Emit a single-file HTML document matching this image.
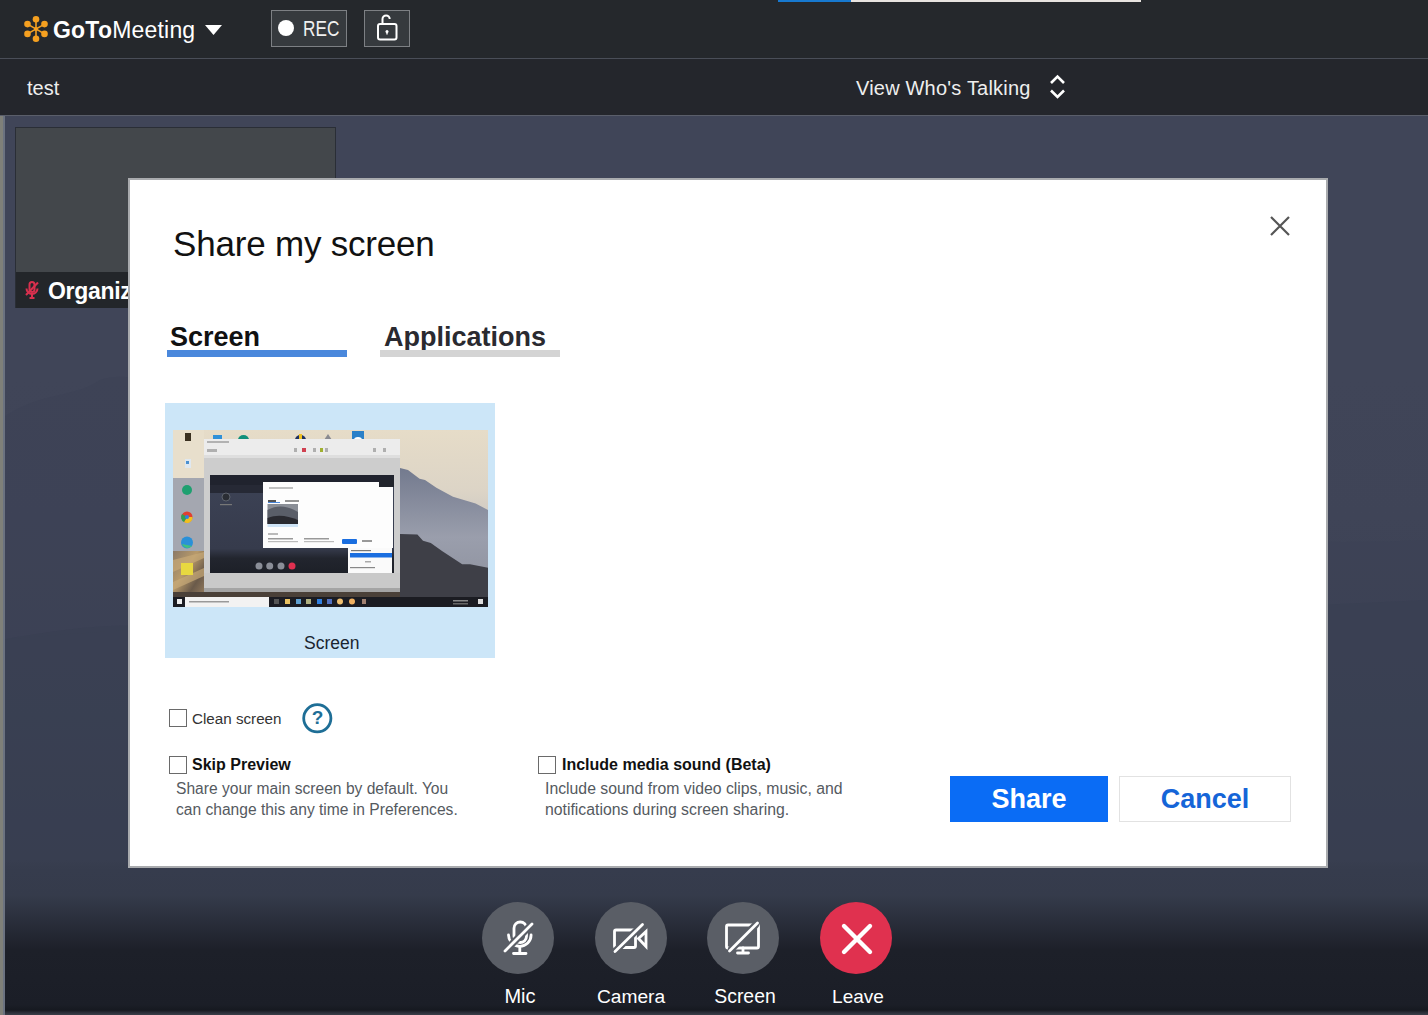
<!DOCTYPE html>
<html><head><meta charset="utf-8">
<style>
*{margin:0;padding:0;box-sizing:border-box}
html,body{width:1428px;height:1015px;overflow:hidden;background:#404558;font-family:"Liberation Sans",sans-serif}
.a{position:absolute}
.t{white-space:nowrap;line-height:1}
#top{left:0;top:0;width:1428px;height:58px;background:#25282c}
#bar2{left:0;top:58px;width:1428px;height:57px;background:#24262c;border-top:1px solid #4a4e58}
#main{left:0;top:115px;width:1428px;height:900px;border-top:1px solid #5a5e6a;
background:linear-gradient(#404558 0px,#404558 260px,#3f4457 400px,#3b4154 600px,#383d4f 740px,#353a4a 765px,#2c303c 812px,#1d2029 840px,#1b1d26 900px)}
svg{position:absolute;overflow:visible}
</style></head><body>
<div id="top" class="a"></div>
<div id="bar2" class="a"></div>
<div id="main" class="a"></div>
<!-- subtle mountains in bg -->
<svg style="left:0;top:0" width="1428" height="1015">
<path d="M0 420 C40 390 70 400 100 380 C130 370 160 385 190 395 C600 420 1000 560 1428 540 L1428 600 C1000 640 400 600 0 640Z" fill="#3c4256" opacity="0.55"/>
<path d="M0 640 C60 630 120 620 170 630 C500 640 1000 620 1428 600 L1428 870 L0 870Z" fill="#393f51" opacity="0.6"/>
</svg>
<div class="a" style="left:0;top:860px;width:1428px;height:155px;background:linear-gradient(rgba(54,60,77,0) 0px,#363c4d 10px,#353b4b 35px,#2b303d 58px,#1d2029 90px,#1b1e27 145px,#161920 150px,#2e323c 153px,#3a3e48 155px)"></div>
<!-- left strip -->
<div class="a" style="left:0;top:116px;width:3px;height:899px;background:#7f8079"></div>
<div class="a" style="left:3px;top:116px;width:2px;height:899px;background:#6b7280"></div>
<!-- top progress -->
<div class="a" style="left:778px;top:0;width:73px;height:2px;background:#1779d0"></div>
<div class="a" style="left:851px;top:0;width:290px;height:2px;background:#e8e4e0"></div>

<!-- logo -->
<svg style="left:22px;top:15px" width="28" height="28" viewBox="-14 -14 28 28">
<g stroke="#f5a020" stroke-width="1.6">
<line x1="0" y1="-9.8" x2="0" y2="9.8"/><line x1="-8.5" y1="-4.9" x2="8.5" y2="4.9"/><line x1="-8.5" y1="4.9" x2="8.5" y2="-4.9"/></g>
<g fill="#f5a020"><circle cx="0" cy="-9.8" r="3.3"/><circle cx="0" cy="9.8" r="3.3"/><circle cx="8.5" cy="-4.9" r="3.3"/><circle cx="8.5" cy="4.9" r="3.3"/><circle cx="-8.5" cy="-4.9" r="3.3"/><circle cx="-8.5" cy="4.9" r="3.3"/><circle r="2"/></g>
</svg>
<div class="a t" style="left:53px;top:19px;font-size:23px;color:#fff;letter-spacing:0.2px"><b>GoTo</b>Meeting</div>
<svg style="left:205px;top:25px" width="17" height="10"><path d="M0 0H17L8.5 10Z" fill="#fff"/></svg>
<!-- REC -->
<div class="a" style="left:271px;top:10px;width:76px;height:37px;border:1px solid #7d8084;background:#363a3e"></div>
<div class="a" style="left:278px;top:20px;width:16px;height:16px;border-radius:50%;background:#fff"></div>
<div class="a t" style="left:303px;top:19px;font-size:21.5px;color:#f0f0f0;transform:scaleX(0.8);transform-origin:0 0">REC</div>
<div class="a" style="left:364px;top:10px;width:46px;height:37px;border:1px solid #7d8084;background:#363a3e"></div>
<svg style="left:364px;top:10px" width="46" height="37">
<path d="M18.5 13.5 V9 a3.6 3.6 0 0 1 7.2 0" fill="none" stroke="#fff" stroke-width="2"/>
<rect x="14" y="14" width="18.5" height="15.5" rx="2" fill="none" stroke="#fff" stroke-width="2"/>
<circle cx="23" cy="21.5" r="1.5" fill="#fff"/><rect x="22.3" y="21.5" width="1.4" height="3" fill="#fff"/>
</svg>

<div class="a t" style="left:27px;top:78px;font-size:20px;color:#eee">test</div>
<div class="a t" style="left:856px;top:78px;font-size:20px;color:#eee;letter-spacing:0.2px">View Who's Talking</div>
<svg style="left:1049px;top:74px" width="17" height="26"><path d="M2 9 L8.5 2.5 L15 9 M2 16.5 L8.5 23 L15 16.5" fill="none" stroke="#fff" stroke-width="2.6"/></svg>

<!-- video tile -->
<div class="a" style="left:15px;top:127px;width:321px;height:181px;background:#43474b;border:1px solid #2a2e36"></div>
<div class="a" style="left:16px;top:272px;width:320px;height:36px;background:#23262a"></div>
<svg style="left:25px;top:281px" width="14" height="18">
<g fill="none" stroke="#d8304e" stroke-width="2"><rect x="4.5" y="1" width="5" height="10" rx="2.5"/><path d="M1.5 7.5 a5.5 5.5 0 0 0 11 0"/><path d="M7 13v3M4.5 17h5"/><path d="M1 14 L13 1.5"/></g></svg>
<div class="a t" style="left:48px;top:280px;font-size:23px;color:#fff;font-weight:bold;letter-spacing:-0.3px">Organiz</div>

<!-- dialog -->
<div id="dlg" class="a" style="left:128px;top:178px;width:1200px;height:690px;background:#fff;border:2px solid #a9abae"></div>
<div class="a t" style="left:173px;top:226px;font-size:35px;color:#111;letter-spacing:-0.2px">Share my screen</div>
<svg style="left:1268px;top:214px" width="24" height="24"><path d="M3 3L21 21M21 3L3 21" stroke="#555" stroke-width="2.2"/></svg>
<div class="a t" style="left:170px;top:324px;font-size:27px;font-weight:bold;color:#111">Screen</div>
<div class="a" style="left:167px;top:350px;width:180px;height:7px;background:#4a88dc"></div>
<div class="a t" style="left:384px;top:324px;font-size:27px;font-weight:bold;color:#2a2a30">Applications</div>
<div class="a" style="left:380px;top:350px;width:180px;height:7px;background:#d4d4d4"></div>

<!-- thumbnail -->
<div class="a" style="left:165px;top:403px;width:330px;height:255px;background:#cce6f8"></div>
<svg style="left:173px;top:430px" width="315" height="177" viewBox="0 0 315 177">
<defs>
<linearGradient id="sky" x1="0" y1="0" x2="0" y2="1"><stop offset="0" stop-color="#e6dcc8"/><stop offset="0.35" stop-color="#dcd4c6"/><stop offset="0.6" stop-color="#c4c2c2"/><stop offset="1" stop-color="#a8a8b0"/></linearGradient>
<linearGradient id="m1" x1="0" y1="0" x2="0" y2="1"><stop offset="0" stop-color="#737a8e"/><stop offset="0.5" stop-color="#9a9eac"/><stop offset="1" stop-color="#8a8e9a"/></linearGradient>
<linearGradient id="gw" x1="0" y1="0" x2="0" y2="1"><stop offset="0" stop-color="#3d4356"/><stop offset="0.75" stop-color="#363b4c"/><stop offset="0.85" stop-color="#22252e"/><stop offset="1" stop-color="#1d2028"/></linearGradient>
<linearGradient id="rock" x1="0" y1="0" x2="1" y2="1"><stop offset="0" stop-color="#8a7a68"/><stop offset="0.4" stop-color="#b89a6a"/><stop offset="0.7" stop-color="#6a5a4a"/><stop offset="1" stop-color="#9a8060"/></linearGradient>
</defs>
<rect width="315" height="177" fill="url(#sky)"/>
<!-- right mountains -->
<path d="M227 38 L235 40 L246.6 48.8 L252 50 L263.4 57.7 L280 66.7 L302.6 73.4 L315 80 V177 H227Z" fill="url(#m1)"/>
<path d="M227 104 L244.4 104.6 L250 110.8 L257.8 113 L269 120.9 L289.2 134.3 L297 134.3 L315 137.7 V177 H227Z" fill="#3e3f47"/>
<!-- left column -->
<rect x="0" y="0" width="31" height="48" fill="#e8dfcc"/>
<rect x="0" y="48" width="31" height="73" fill="#a4a7b0"/>
<rect x="0" y="121" width="31" height="48" fill="url(#rock)"/>
<path d="M0 130 L31 122 L31 128 L0 142Z M0 152 L31 138 L31 146 L0 160Z" fill="#c8aa78" opacity="0.7"/>
<!-- desktop icons -->
<rect x="12" y="3" width="6" height="8" fill="#3a3020"/>
<rect x="12" y="29" width="6" height="9" fill="#dfe8f0"/><rect x="13" y="31" width="3" height="3" fill="#4a90d0"/>
<circle cx="14" cy="60" r="5" fill="#1ea070"/>
<circle cx="14" cy="87" r="5.5" fill="#e04030"/><path d="M14 87 L19.5 87 A5.5 5.5 0 0 1 11 92Z" fill="#f0c020"/><path d="M14 87 L11 92 A5.5 5.5 0 0 1 9 84Z" fill="#30a050"/><circle cx="14" cy="87" r="2" fill="#3080e0"/>
<circle cx="14" cy="112.5" r="6" fill="#2a90d8"/><path d="M9 114 a6 6 0 0 0 10 2" fill="#40c080"/>
<rect x="8" y="133" width="12" height="12" fill="#e8d840"/>
<rect x="40" y="5" width="9" height="6" fill="#3090d8"/>
<path d="M65 10 a5.5 5 0 0 1 11 0Z" fill="#10907a"/>
<path d="M122 10 a5.5 5 0 0 1 11 0Z" fill="#203060"/><rect x="126" y="4" width="3" height="6" fill="#f0c020"/>
<path d="M151 10 l4 -6 l4 6Z" fill="#8a8a90"/>
<rect x="179" y="1" width="12" height="10" fill="#2a80c8"/><path d="M181 10 a4 3 0 0 1 8 0Z" fill="#fff"/>
<!-- explorer window -->
<rect x="31" y="9" width="196" height="153" fill="#cdcdcd"/>
<rect x="31" y="9" width="196" height="16" fill="#ececec"/>
<rect x="31" y="25" width="196" height="3" fill="#dedede"/>
<rect x="31" y="143" width="196" height="16" fill="#c9c9c9"/>
<rect x="31" y="158" width="196" height="4" fill="#a4a4a4"/>
<rect x="34" y="11" width="22" height="2" fill="#777" opacity="0.5"/>
<g fill="#888" opacity="0.6"><rect x="34" y="19" width="10" height="3"/><rect x="121" y="18" width="3" height="4"/><rect x="140" y="18" width="3" height="4"/><rect x="152" y="18" width="3" height="4"/><rect x="200" y="18" width="3" height="4"/><rect x="210" y="18" width="3" height="4"/></g>
<rect x="129" y="18" width="4" height="4" fill="#d04050"/><rect x="147" y="18" width="3" height="4" fill="#a0b030"/>
<!-- goto window -->
<rect x="37" y="45" width="184" height="98" fill="url(#gw)"/>
<rect x="37" y="45" width="184" height="10" fill="#20232e"/>
<rect x="37" y="55" width="53" height="8" fill="#262935"/>
<circle cx="53" cy="67" r="4" fill="#2a2d34" stroke="#6a6e78" stroke-width="0.8"/><rect x="47" y="74" width="12" height="1.2" fill="#777"/>
<g fill="#8a8e98"><circle cx="86" cy="136" r="3.5"/><circle cx="96.7" cy="136" r="3.5"/><circle cx="108" cy="136" r="3.5"/></g>
<circle cx="119" cy="136" r="3.5" fill="#e03050"/>
<!-- inner dialog -->
<rect x="90" y="52" width="130" height="66" fill="#fdfdfd"/>
<rect x="96" y="57" width="24" height="2" fill="#999" opacity="0.6"/>
<rect x="95" y="70" width="8" height="2" fill="#555"/><rect x="112" y="70" width="14" height="2" fill="#666" opacity="0.7"/>
<rect x="95" y="72" width="12" height="1" fill="#4a88dc"/>
<rect x="94.5" y="74" width="30.5" height="20" fill="#8a8e96"/>
<path d="M94.5 80 C105 74 115 76 125 82 V94 H94.5Z" fill="#5a5e68"/>
<path d="M94.5 88 C105 84 115 86 125 90 V94 H94.5Z" fill="#2a2a30"/>
<rect x="94.5" y="94" width="30.5" height="3" fill="#cfe4f6"/>
<rect x="95" y="103" width="10" height="2" fill="#bbb"/>
<rect x="95" y="108" width="25" height="1.5" fill="#999"/><rect x="131" y="108" width="25" height="1.5" fill="#999"/>
<rect x="95" y="111" width="30" height="1.2" fill="#bbb"/><rect x="131" y="111" width="30" height="1.2" fill="#bbb"/>
<rect x="169" y="109" width="15" height="5" rx="1" fill="#1a6ee0"/>
<rect x="189" y="110" width="10" height="2" fill="#999"/>
<rect x="206" y="50" width="15" height="7" fill="#22252c"/>
<!-- right popup -->
<rect x="175" y="118" width="44" height="25" fill="#fafafa"/>
<rect x="177" y="123" width="42" height="4.5" fill="#1a6ee0"/>
<rect x="178" y="120" width="20" height="1.2" fill="#777"/>
<rect x="192" y="131" width="6" height="1.5" fill="#aaa"/>
<rect x="177" y="137" width="25" height="1.2" fill="#888"/>
<!-- taskbar -->
<rect x="0" y="162" width="227" height="5" fill="#4a4038"/>
<rect x="0" y="167" width="315" height="10" fill="#1b1c22"/>
<rect x="4" y="169" width="5" height="5" fill="#eee"/>
<rect x="12" y="167" width="84" height="10" fill="#f2f2f2"/>
<rect x="16" y="171" width="40" height="1.5" fill="#999"/>
<g><rect x="101" y="169" width="5" height="5" fill="#555"/><rect x="112" y="169" width="5" height="5" fill="#e8c060"/><rect x="123" y="169" width="5" height="5" fill="#60a0d0"/><rect x="133" y="169" width="5" height="5" fill="#b0b080"/><rect x="144" y="169" width="5" height="5" fill="#3080e0"/><rect x="154" y="169" width="5" height="5" fill="#5070c0"/><circle cx="167" cy="171.5" r="3" fill="#f0c070"/><circle cx="179" cy="171.5" r="3" fill="#f0b060"/><rect x="189" y="169" width="4" height="5" fill="#a08070"/></g>
<rect x="280" y="170" width="15" height="1.5" fill="#888"/><rect x="280" y="173" width="15" height="1.5" fill="#666"/><rect x="305" y="169" width="5" height="5" fill="#ddd"/>
</svg>

<div class="a t" style="left:304px;top:635px;font-size:17.5px;color:#1a2530">Screen</div>

<!-- checkboxes -->
<div class="a" style="left:169px;top:709px;width:18px;height:18px;border:1.5px solid #6a6a6a"></div>
<div class="a t" style="left:192px;top:711px;font-size:15.2px;color:#333">Clean screen</div>
<svg style="left:302px;top:703px" width="31" height="31"><circle cx="15.3" cy="15.3" r="13.6" fill="none" stroke="#1e6e96" stroke-width="2.8"/></svg>
<div class="a t" style="left:302px;top:708px;width:31px;text-align:center;font-size:19px;font-weight:bold;color:#1e6e96">?</div>
<div class="a" style="left:169px;top:756px;width:18px;height:18px;border:1.5px solid #6a6a6a"></div>
<div class="a t" style="left:192px;top:757px;font-size:16px;font-weight:bold;color:#111">Skip Preview</div>
<div class="a t" style="left:176px;top:779px;font-size:15.6px;color:#555a5f;line-height:20.5px">Share your main screen by default. You<br>can change this any time in Preferences.</div>
<div class="a" style="left:538px;top:756px;width:18px;height:18px;border:1.5px solid #6a6a6a"></div>
<div class="a t" style="left:562px;top:757px;font-size:16px;font-weight:bold;color:#111">Include media sound (Beta)</div>
<div class="a t" style="left:545px;top:779px;font-size:15.8px;color:#555a5f;line-height:20.5px">Include sound from video clips, music, and<br>notifications during screen sharing.</div>

<!-- buttons -->
<div class="a" style="left:950px;top:776px;width:158px;height:46px;background:#0a6cf5"></div>
<div class="a t" style="left:950px;top:786px;width:158px;text-align:center;font-size:27px;font-weight:bold;color:#fff">Share</div>
<div class="a" style="left:1119px;top:776px;width:172px;height:46px;background:#fff;border:1px solid #e2e2e2"></div>
<div class="a t" style="left:1119px;top:786px;width:172px;text-align:center;font-size:27px;font-weight:bold;color:#1565d8">Cancel</div>

<!-- bottom toolbar -->
<div class="a" style="left:482px;top:902px;width:72px;height:72px;border-radius:50%;background:#5a5e66"></div>
<div class="a" style="left:595px;top:902px;width:72px;height:72px;border-radius:50%;background:#5a5e66"></div>
<div class="a" style="left:707px;top:902px;width:72px;height:72px;border-radius:50%;background:#5a5e66"></div>
<div class="a" style="left:820px;top:902px;width:72px;height:72px;border-radius:50%;background:#e0314f"></div>
<svg style="left:0;top:0" width="1428" height="1015">
<g fill="none" stroke="#fff" stroke-width="2.8" stroke-linecap="round">
<rect x="514" y="922" width="12.5" height="20.5" rx="6.2"/>
<path d="M508.5 935 a11.3 11.3 0 0 0 22.6 0"/><path d="M519.8 947.5v5M513.5 953.5h12.5"/>
<rect x="614.5" y="930" width="21" height="17.5" rx="1.5"/>
<path d="M638.5 938.5 L646 931.5 V946.5 Z"/>
<rect x="726.5" y="925" width="32" height="23" rx="1.5"/>
<path d="M743 948v4M737.5 953h11"/>
</g>
<g stroke="#5a5e66" stroke-width="7" stroke-linecap="round"><path d="M507 949 L530 926"/><path d="M617 949.5 L640.5 926.5"/><path d="M731.5 949 L755.5 925"/></g>
<g stroke="#fff" stroke-width="2.8" stroke-linecap="round"><path d="M505 951 L532 924"/><path d="M615 951.5 L642.5 924.5"/><path d="M729.5 951 L757.5 923"/></g>
<path d="M844 926 L870 952 M870 926 L844 952" stroke="#fff" stroke-width="4.4" stroke-linecap="round"/>
</svg>
<div class="a t" style="left:470px;top:986px;width:100px;text-align:center;font-size:20px;color:#fff">Mic</div>
<div class="a t" style="left:581px;top:986.5px;width:100px;text-align:center;font-size:19.2px;color:#fff">Camera</div>
<div class="a t" style="left:695px;top:986.5px;width:100px;text-align:center;font-size:19.4px;color:#fff">Screen</div>
<div class="a t" style="left:808px;top:986.5px;width:100px;text-align:center;font-size:19px;color:#fff">Leave</div>
</body></html>
